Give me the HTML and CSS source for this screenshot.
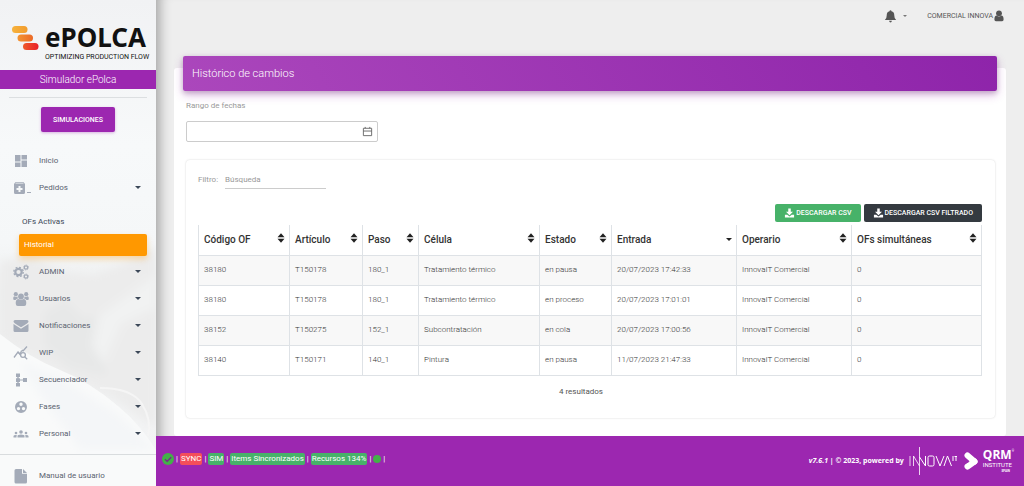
FILE: index.html
```html
<!DOCTYPE html>
<html lang="es">
<head>
<meta charset="utf-8">
<meta name="viewport" content="width=device-width, initial-scale=1">
<title>ePolca - Histórico de cambios</title>
<link rel="stylesheet" href="styles.css">
</head>
<body>
<svg class="defs" width="0" height="0" aria-hidden="true">
  <symbol id="sort" viewBox="0 0 8 10"><path d="M.5 4.200 4 .2 7.500 4.200zM.5 5.800h7L4 9.800z"/></symbol>
  <symbol id="download" viewBox="0 0 12 12"><path d="M4.500 0.500h3v4h2.700L6 8.700 1.800 4.500h2.700zM0.500 8h2.800L6 10.300 8.700 8h2.800v3.500h-11z"/></symbol>
</svg>
<div class="app">
  <aside class="sidebar">
    <svg class="scenery" viewBox="0 0 156 486" preserveAspectRatio="none" aria-hidden="true">
      <defs><linearGradient id="sky" x1="0" y1="0" x2="0" y2="1"><stop offset="0" stop-color="#f1f2f4"/><stop offset=".3" stop-color="#f7f9fa"/><stop offset=".5" stop-color="#f5f7f8"/><stop offset=".6" stop-color="#eeefef"/><stop offset="1" stop-color="#f4f5f6"/></linearGradient>
      <filter id="soft"><feGaussianBlur stdDeviation="4"/></filter></defs>
      <path fill="url(#sky)" d="M0 0h156v486H0z"/>
      <g filter="url(#soft)">
        <path fill="#ececec" d="M0 262 30 256 62 272 92 276 124 264 156 246v182L110 396 60 372 0 338z"/>
        <path fill="#e7e8e8" d="M44 312 66 300 84 318 108 314 98 350 108 376 70 368 44 346z"/>
        <path fill="#f1f2f2" d="M98 316 156 274v34l-34 16-18 40-12-18z"/>
      </g>
      <path fill="#f9fafa" d="M0 334Q30 358 60 370T118 406Q140 424 156 450v36H0z"/>
      <path fill="#f4f6f8" filter="url(#soft)" d="M20 362 60 378 118 414 156 450H80L34 386z"/>
      <path fill="none" stroke="#f5f5f5" stroke-width="2" d="M100 388Q132 388 142 404T148 436"/>
    </svg>
    <a class="brand" href="#" aria-label="ePOLCA">
      <svg class="brand-mark" viewBox="0 0 27 24" aria-hidden="true">
        <defs><linearGradient id="b1"><stop stop-color="#f6b23c"/><stop offset="1" stop-color="#f29c2e"/></linearGradient><linearGradient id="b2"><stop stop-color="#f39432"/><stop offset="1" stop-color="#ec6a28"/></linearGradient><linearGradient id="b3"><stop stop-color="#ee5a2a"/><stop offset="1" stop-color="#e9202a"/></linearGradient></defs>
        <rect width="15.500" height="7" rx="3.500" fill="url(#b1)"/><rect x="5.500" y="8.500" width="15.500" height="7" rx="3.500" fill="url(#b2)"/><rect x="11" y="17" width="15.500" height="7" rx="3.500" fill="url(#b3)"/>
      </svg>
      <span class="brand-text"><span class="brand-name">ePOLCA</span><span class="brand-tag">OPTIMIZING PRODUCTION FLOW</span></span>
    </a>
    <div class="plant">Simulador ePolca</div>
    <div class="side-action"><button class="btn-sim" type="button">SIMULACIONES</button></div>
    <nav class="menu">
      <a class="item" href="#"><svg class="ico" viewBox="0 0 16 16"><path d="M2 2h5.500v6.500H2zM2 9.500h5.500V14H2zM8.500 2H14v4.500H8.500zM8.500 7.500H14V14H8.500z"/></svg><span>Inicio</span></a>
      <button class="item" type="button"><svg class="ico ico-wide" viewBox="0 0 20 16"><path fill-rule="evenodd" d="M2.500 2h8l1.500 2v8.500q0 1.500-1.500 1.500h-8Q1 14 1 12.500V4zM5.500 6v2h-2v2h2v2h2v-2h2V8h-2V6zM2.500 3.500h8v-.700h-8zM14 12h4v1h-4z"/></svg><span>Pedidos</span><i class="caret"></i></button>
      <div class="submenu">
        <a class="sub" href="#">OFs Activas</a>
        <a class="sub active" href="#">Historial</a>
      </div>
      <button class="item" type="button"><svg class="ico" viewBox="0 0 16 16"><g fill="none" stroke="currentColor"><circle cx="5.500" cy="8" r="3.200" stroke-width="2.200"/><circle cx="5.500" cy="8" r="4.700" stroke-width="1.400" stroke-dasharray="1.900 1.800"/><circle cx="13" cy="3.500" r="1.700" stroke-width="1.200"/><circle cx="13" cy="3.500" r="2.500" stroke-width=".8" stroke-dasharray="1 .96"/><circle cx="13" cy="12.500" r="1.700" stroke-width="1.200"/><circle cx="13" cy="12.500" r="2.500" stroke-width=".8" stroke-dasharray="1 .96"/></g></svg><span>ADMIN</span><i class="caret"></i></button>
      <button class="item" type="button"><svg class="ico" viewBox="0 0 16 16"><circle cx="8" cy="5.500" r="2.900"/><circle cx="2.800" cy="3.200" r="2.100"/><circle cx="13.200" cy="3.200" r="2.100"/><path d="M2.800 13q-.5-4.500 2.400-5Q8 9.600 10.800 8q2.900.5 2.400 5 0 2-2 2H4.800q-2 0-2-2zM.2 8Q0 5.300 1.400 5.300 3 6.200 4.500 5.600 4.600 7 5 7.600 3.300 7.800 2.500 9H1.500Q.2 9 .2 8zM15.800 8Q16 5.300 14.600 5.300 13 6.200 11.500 5.600 11.400 7 11 7.600 12.700 7.800 13.500 9h1Q15.800 9 15.800 8z"/></svg><span>Usuarios</span><i class="caret"></i></button>
      <button class="item" type="button"><svg class="ico" viewBox="0 0 16 16"><path d="M.5 3.500Q.5 2 2 2h12q1.500 0 1.500 1.500Q15.500 5 8 9.300.5 5 .5 3.500zM.5 6 8 10.700 15.500 6v6.500Q15.500 14 14 14H2Q.5 14 .5 12.500z"/></svg><span>Notificaciones</span><i class="caret"></i></button>
      <button class="item" type="button"><svg class="ico" viewBox="0 0 16 16"><g fill="none" stroke="currentColor" stroke-width="1.300"><path d="M1 12.500 5 7l2 2M9 5l1 1 4-4.500"/><path d="M5 7 7 9.500 8.600 5.500"/><circle cx="10" cy="10" r="2.400"/><path d="m11.700 11.700 2.500 2.500"/></g></svg><span>WIP</span><i class="caret"></i></button>
      <button class="item" type="button"><svg class="ico" viewBox="0 0 16 16"><path d="M3 1.500h4v3.500H5.700v1.300H7v1.100h3V6h4v4h-4V8.600H7v1.300H5.700V11H7v3.500H3V11h1.300V9.900H3V6.300h1.300V5H3z"/></svg><span>Secuenciador</span><i class="caret"></i></button>
      <button class="item" type="button"><svg class="ico" viewBox="0 0 16 16"><path fill-rule="evenodd" d="M8 2a6 6 0 1 1 0 12A6 6 0 0 1 8 2zM8 3.600a1.700 1.700 0 1 0 0 3.400 1.700 1.700 0 0 0 0-3.400zM5.500 7.900a1.700 1.700 0 1 0 0 3.400 1.700 1.700 0 0 0 0-3.400zM10.500 7.900a1.700 1.700 0 1 0 0 3.400 1.700 1.700 0 0 0 0-3.400z"/></svg><span>Fases</span><i class="caret"></i></button>
      <button class="item" type="button"><svg class="ico" viewBox="0 0 16 16"><circle cx="8" cy="6" r="1.800"/><circle cx="3" cy="7" r="1.300"/><circle cx="13" cy="7" r="1.300"/><path d="M4.500 11.500V10q0-1.500 3.500-1.500t3.500 1.500v1.500zM.5 11.500V10Q.6 8.800 3.800 9q-.3.500-.3 2.500zM15.500 11.500V10q-.1-1.200-3.300-1 .3.500.3 2.500z"/></svg><span>Personal</span><i class="caret"></i></button>
    </nav>
    <nav class="menu menu-foot">
      <a class="item" href="#"><svg class="ico" viewBox="0 0 16 16"><path d="M1.500 2.500Q1.500 1 3 1h6v4.800h5V14q0 1.500-1.500 1.500H3q-1.500 0-1.500-1.500zM10 1l4 4h-4z"/></svg><span>Manual de usuario</span></a>
    </nav>
  </aside>

  <div class="page">
    <header class="topbar">
      <button class="bell" type="button" aria-label="Avisos"><svg viewBox="0 0 12 12"><path d="M6 .3q.9 0 .9.900Q9.500 1.800 9.500 5q0 3 1.700 4.300H.8Q2.500 8 2.500 5q0-3.200 2.600-3.800 0-.9.900-.9zM4.700 10h2.600q-.2 1.600-1.300 1.600T4.700 10z"/></svg><i class="caret caret-sm"></i></button>
      <a class="user" href="#">COMERCIAL INNOVA<svg viewBox="0 0 10 12"><circle cx="5" cy="3.300" r="2.900"/><path d="M.4 9.500q0-3.800 2.300-4Q5 7.300 7.300 5.500q2.300.2 2.300 4 0 1.700-1.500 1.700H1.900Q.4 11.200.4 9.500z"/></svg></a>
    </header>

    <main class="card">
      <h1 class="card-title">Histórico de cambios</h1>
      <div class="card-body">
        <label class="label" for="range">Rango de fechas</label>
        <div class="date-box">
          <input id="range" type="text">
          <svg viewBox="0 0 12 12" aria-hidden="true"><path fill="none" stroke="currentColor" d="M1.500 2.500h9v8h-9zM1.500 5.500h9M3.500 1v1.500M8.500 1v1.500"/></svg>
        </div>
        <section class="panel">
          <div class="filter"><label for="search">Filtro:</label><input id="search" type="text" placeholder="Búsqueda"></div>
          <div class="exports">
            <button class="btn green" type="button"><svg><use href="#download"/></svg>DESCARGAR CSV</button>
            <button class="btn dark" type="button"><svg><use href="#download"/></svg>DESCARGAR CSV FILTRADO</button>
          </div>
          <table class="grid">
            <colgroup><col class="c-code"><col class="c-art"><col class="c-step"><col class="c-cell"><col class="c-state"><col class="c-in"><col class="c-op"><col></colgroup>
            <thead><tr>
              <th><div>Código OF<svg><use href="#sort"/></svg></div></th>
              <th><div>Artículo<svg><use href="#sort"/></svg></div></th>
              <th><div>Paso<svg><use href="#sort"/></svg></div></th>
              <th><div>Célula<svg><use href="#sort"/></svg></div></th>
              <th><div>Estado<svg><use href="#sort"/></svg></div></th>
              <th><div>Entrada<i class="caret"></i></div></th>
              <th><div>Operario<svg><use href="#sort"/></svg></div></th>
              <th><div>OFs simultáneas<svg><use href="#sort"/></svg></div></th>
            </tr></thead>
            <tbody>
              <tr><td>38180</td><td>T150178</td><td>180_1</td><td>Tratamiento térmico</td><td>en pausa</td><td>20/07/2023 17:42:33</td><td>InnovaIT Comercial</td><td>0</td></tr>
              <tr><td>38180</td><td>T150178</td><td>180_1</td><td>Tratamiento térmico</td><td>en proceso</td><td>20/07/2023 17:01:01</td><td>InnovaIT Comercial</td><td>0</td></tr>
              <tr><td>38152</td><td>T150275</td><td>152_1</td><td>Subcontratación</td><td>en cola</td><td>20/07/2023 17:00:56</td><td>InnovaIT Comercial</td><td>0</td></tr>
              <tr><td>38140</td><td>T150171</td><td>140_1</td><td>Pintura</td><td>en pausa</td><td>11/07/2023 21:47:33</td><td>InnovaIT Comercial</td><td>0</td></tr>
            </tbody>
          </table>
          <p class="results">4 resultados</p>
        </section>
      </div>
    </main>

    <footer class="footer">
      <div class="status">
        <svg class="check" viewBox="0 0 12 12"><circle cx="6" cy="6" r="6" fill="#43b048"/><path d="m3 6.200 2.200 2.200 4-4.200" fill="none" stroke="#7b2390" stroke-width="1.300"/></svg><span>|</span>
        <span class="tag red">SYNC</span><span>|</span>
        <span class="tag">SIM</span><span>|</span>
        <span class="tag">Items Sincronizados</span><span>|</span>
        <span class="tag">Recursos 134%</span><span>|</span>
        <i class="dot"></i><span>|</span>
      </div>
      <div class="credits">
        <span><em>v7.6.1</em> | © 2023, powered by</span>
        <svg class="innova" viewBox="0 0 48 30" role="img" aria-label="INNOVA IT"><g fill="none" stroke="#fff" stroke-width="1"><path d="M1 10v10M4.500 20V10l6 10M10.500 1v28" stroke-opacity=".8"/><path d="M10.500 11 16.500 20V10M19 11.500q0-1.500 1.500-1.500h3q1.500 0 1.500 1.500v7q0 1.500-1.500 1.500h-3q-1.500 0-1.500-1.500zM27 10l4 10 4-10M35 20l3.500-10L42.500 20M44 10v5M45.500 10.500h3M47 10.500V15"/></g></svg>
        <svg class="qrm-mark" viewBox="0 0 14 18" aria-hidden="true"><path d="M3.500 3.500 10.500 9.500" fill="none" stroke="#fff" stroke-width="6" stroke-linecap="round"/><path d="M10.500 9.500 3.500 14.500" fill="none" stroke="#fff" stroke-width="6" stroke-linecap="round"/><path d="M0 6.500 5 10 0 12.500" fill="#9c27b0"/></svg>
        <span class="qrm"><span class="qrm-name"><b>QRM</b><i>®</i></span><span>INSTITUTE</span><small>SPAIN</small></span>
      </div>
    </footer>
  </div>
</div>
</body>
</html>
```
FILE: styles.css
```css
* { box-sizing: border-box; }
body { margin: 0; background: #eee; color: #3c4858; font: 300 8px/12px Roboto, "Liberation Sans", sans-serif; }
button, input { font: inherit; color: inherit; }
button { border: 0; background: none; padding: 0; cursor: pointer; }
a { color: inherit; text-decoration: none; }
svg { fill: currentColor; flex: none; }
.defs { position: absolute; }
.app { display: flex; height: 100vh; }

.sidebar { position: relative; z-index: 1; width: 156px; flex: none; overflow: hidden; background: #f7f8f9; }
.sidebar > * { position: relative; }
.sidebar > .scenery { position: absolute; inset: 0; width: 100%; height: 100%; }
.brand { display: flex; align-items: flex-start; gap: 6px; height: 70px; padding: 26px 8px 0 12px; color: #111; }
.brand-mark { width: 27px; height: 24px; }
.brand-text { display: flex; flex-direction: column; white-space: nowrap; }
.brand-name { font: 700 26px/22px "Noto Sans", sans-serif; }
.brand-tag { margin-top: 5px; font: 400 7px/8px Roboto, sans-serif; }
.plant { background: #9c27b0; color: #fff; font-size: 10px; line-height: 19px; text-align: center; }
.side-action { margin: 8px 9px 0; padding-top: 9px; border-top: 1px solid #dcdfe1; text-align: center; }
.btn-sim { width: 74px; height: 25px; border-radius: 2px; background: #9c27b0; color: #fff; font-size: 7px; font-weight: 500; box-shadow: 0 1px 3px #9c27b055; }
.menu { padding-top: 15px; }
.item { display: flex; align-items: center; width: 100%; height: 27px; padding: 0 15px 0 13px; font-weight: 400; color: #5a6270; text-align: left; }
.item span { flex: 1; }
.ico { width: 16px; height: 16px; margin-right: 10px; color: #a4abb8; }
.ico-wide { width: 20px; margin-right: 6px; }
.caret { flex: none; border: solid transparent; border-width: 3px 3px 0; border-top-color: #222; }
.item .caret { border-top-color: #3c4858; }
.submenu { padding: 10px 9px 2px 19px; }
.sub { display: block; padding: 0 3px; line-height: 22px; font-weight: 400; }
.sub.active { padding: 0 5px; margin-top: 1px; border-radius: 2px; background: #ff9800; color: #fff; box-shadow: 0 3px 6px #ff980055; }
.menu-foot { margin-top: 7px; padding-top: 7px; border-top: 1px solid #d9dcde; }

.page { display: flex; flex-direction: column; flex: 1; min-width: 0; box-shadow: inset 14px 0 12px -10px #0000004d; }
.topbar { display: flex; justify-content: flex-end; align-items: center; gap: 20px; height: 32px; padding-right: 20px; color: #555; font-size: 7px; font-weight: 400; }
.bell { display: flex; align-items: center; gap: 6px; }
.bell svg { width: 13px; height: 13px; }
.caret-sm { border-width: 2px 2px 0; border-top-color: #777; }
.user { display: flex; align-items: center; gap: 1px; }
.user svg { width: 10px; height: 12px; }

.card { flex: 1; min-height: 0; margin: 36px 18px 0; padding: 0 9px; border-radius: 3px; background: #fff; }
.card-title { margin: -12px 0 0; padding: 0 9px; border-radius: 2px; background: linear-gradient(60deg, #ab47bc, #8e24aa); color: #fff; font-size: 11px; font-weight: 300; line-height: 35px; box-shadow: 0 4px 10px #9c27b04d, 0 2px 5px #0003; }
.card-body { padding: 9px 2px 0 3px; color: #333; }
.label { display: block; color: #999; font-weight: 400; }
.date-box { display: flex; align-items: center; width: 192px; height: 21px; margin-top: 9px; padding: 0 4px; border: 1px solid #ccc; border-radius: 2px; color: #666; }
.date-box input { flex: 1; min-width: 0; border: 0; outline: 0; background: none; }
.date-box svg { width: 11px; height: 11px; }
.panel { margin-top: 18px; padding: 10px 13px 20px 12px; border-radius: 4px; box-shadow: 0 0 2px #0000002e; }
.filter { display: flex; align-items: center; gap: 7px; color: #999; font-weight: 400; }
.filter input { width: 101px; height: 19px; padding: 0; border: 0; border-bottom: 1px solid #ccc; outline: 0; background: none; }
.filter input::placeholder { color: #999; opacity: 1; }
.exports { display: flex; justify-content: flex-end; gap: 3px; margin: 15px 0 3px; }
.btn { display: flex; align-items: center; justify-content: center; gap: 1px; height: 18px; padding: 0 9px; border-radius: 2px; color: #fff; font-size: 7px; font-weight: 500; }
.btn svg { width: 11px; height: 10px; }
.green { background: #47b269; }
.dark { background: #343a40; }
.grid { width: 100%; border-collapse: collapse; table-layout: fixed; }
.grid th, .grid td { padding: 0 4px 0 5px; border: 1px solid #dee2e6; text-align: left; }
.grid th { height: 30px; border-top: 0; font-size: 10px; font-weight: 500; white-space: nowrap; }
.grid th div { display: flex; align-items: center; justify-content: space-between; }
.grid th svg { width: 8px; height: 10px; margin-bottom: 3px; color: #222; }
.grid td { height: 30px; padding-bottom: 1px; }
.grid tbody tr:nth-child(odd) { background: #f8f8f8; }
.c-code { width: 91px; } .c-art { width: 73px; } .c-step { width: 56px; } .c-cell { width: 121px; }
.c-state { width: 72px; } .c-in { width: 125px; } .c-op { width: 115px; }
.results { margin: 10px 0 0; text-align: center; font-weight: 400; color: #555; padding-right: 18px; }

.footer { display: flex; align-items: center; justify-content: space-between; height: 50px; padding: 0 10px 5px 6px; background: #9c27b0; color: #fff; font-weight: 400; }
.status { display: flex; align-items: center; gap: 2px; white-space: nowrap; }
.check { width: 12px; height: 12px; }
.tag { padding: 0 1px; border-radius: 2px; background: #47b269; }
.red { background: #f44e5a; }
.dot { width: 8px; height: 8px; border-radius: 50%; background: #43b048; }
.credits { display: flex; align-items: center; gap: 5px; font: 700 7px/12px "Open Sans", sans-serif; white-space: nowrap; padding-top: 4px; }
.innova { width: 48px; height: 30px; }
.qrm-mark { width: 14px; height: 18px; margin-left: 2px; }
.qrm { display: flex; flex-direction: column; font: 400 6px/8px Roboto, sans-serif; }
.qrm-name { display: flex; align-items: flex-start; }
.qrm b { font: 700 12px/12px "Open Sans", sans-serif; }
.qrm i { font-size: 3px; line-height: 5px; font-style: normal; }
.qrm small { font-size: 3px; line-height: 4px; font-weight: 700; text-align: right; padding-right: 4px; }
```
